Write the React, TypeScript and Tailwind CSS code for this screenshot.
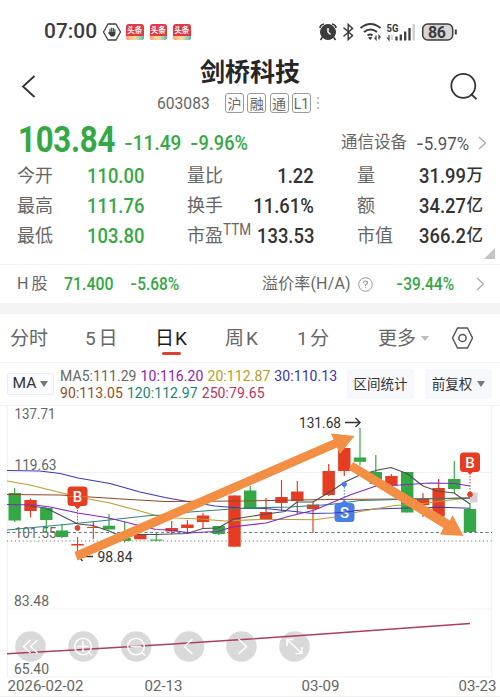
import React from "react";

const GREEN = "#34a844";
const RED = "#e63c22";

function Minus() {
  return <span className="font-['Inter']">-</span>;
}

function StatusBar() {
  return (
    <div className="flex h-[50px] items-center pt-[13px] text-[#3c3c3c]">
      <span className="ml-[44px] w-[58px] origin-left scale-x-[1.02] whitespace-nowrap text-[20.5px] font-medium leading-none">07:00</span>
      <svg width="20" height="18" viewBox="0 0 20 18" fill="none" stroke="#3c3c3c">
        <path d="M6 1h8l4.5 8-4.5 8H6L1.500 9z" strokeWidth="1.3" strokeLinejoin="round" />
        <path d="M8 9V6M9.700 9V5M11.300 9V5.300M12.900 9V6.500M8 9.500h4.900v1.500l-1.200 2H9.200L6.800 10z" strokeWidth="1.100" strokeLinecap="round" fill="#3c3c3c" />
      </svg>
      <div className="ml-[4px] flex gap-[6px]">
        {[0, 1, 2].map((i) => (
          <div key={i} className="flex h-[16px] w-[17.500px] flex-col items-center overflow-hidden rounded-[3px] bg-[#df3942]">
            <span className="h-[12px] whitespace-nowrap text-[7.500px] font-bold leading-[13px] text-white">头条</span>
            <span className="h-[4px] w-full bg-gradient-to-r from-[#f6a97b] via-[#f8dc98] to-[#47bac4]" />
          </div>
        ))}
      </div>
      <svg className="ml-[127px]" width="140" height="22" viewBox="317 20 140 22" fill="none" stroke="#3c3c3c">
        <circle cx="327" cy="31" r="7.500" fill="#3c3c3c" />
        <path d="M319 27q0-3 4-4M335 27q0-3-4-4M321.500 36l-2 3M332.500 36l2 3" strokeWidth="1.600" />
        <path d="M327 27v4l2.500 2.500" stroke="#fff" strokeWidth="1.500" />
        <path d="M342.500 26.500l9 8-4.300 4V23.500l4.300 4-9 8" strokeWidth="1.500" />
        <path d="M359.500 27q10-8 20 0M363 31q6.500-5 13 0M366.500 34.500q3-2 5 0" strokeWidth="2" />
        <path d="M367.700 36.500l1.500 2 1.500-2z" fill="#3c3c3c" />
        <path d="M375 34.500v4l-1.500-2M378 38.500v-4l1.500 2" strokeWidth="1.200" />
        <text x="385.500" y="30.500" fontSize="10" fontWeight="700" textLength="12" lengthAdjust="spacingAndGlyphs" fill="#3c3c3c" stroke="none">5G</text>
        <path d="M388 34v5l-2-2.500" strokeWidth="1.100" />
        <path d="M391 34v5" stroke="#aaa" />
        <path d="M395.500 39.500v-4M399.800 39.500v-6M404.200 39.500v-9M408.500 39.500v-12.500" strokeWidth="2.300" />
        <path d="M412.700 39.500V23" stroke="#ccc" strokeWidth="2.300" />
        <rect x="421.700" y="23" width="30" height="16" rx="5" fill="#d6d6d6" strokeWidth="1.500" />
        <path d="M454.800 28.500v5" strokeWidth="2" />
        <text x="427" y="36.700" fontSize="16" fontWeight="700" textLength="18" fill="#3c3c3c" stroke="none">86</text>
      </svg>
    </div>
  );
}

function Header() {
  return (
    <div className="flex h-[68px]">
      <svg className="ml-[20px] mt-[24px]" width="17" height="24" viewBox="0 0 17 24" fill="none" stroke="#333" strokeWidth="1.800">
        <path d="M14.500 2L3 12.500 14.500 23" />
      </svg>
      <div className="ml-[120px] w-[166px]">
        <div className="ml-[43px] mt-[9px] h-[27px] whitespace-nowrap text-[25px] font-bold leading-[27px] text-[#262626]">剑桥科技</div>
        <div className="mt-[7px] flex h-[20px] items-center">
          <span className="w-[68px] origin-left scale-x-[0.92] whitespace-nowrap text-[17px] leading-none text-[#666]">603083</span>
          <div className="flex gap-[3.300px]">
            {["沪", "融", "通", "L1"].map((t) => (
              <span key={t} className="flex h-[20px] w-[19px] items-center justify-center rounded-[3px] border border-[#999] pt-[1px] text-[14px] leading-none text-[#666]">{t}</span>
            ))}
          </div>
          <div className="ml-[6px] flex flex-col gap-[3px]">
            {[0, 1, 2].map((i) => <i key={i} className="size-[2px] rounded-full bg-[#aaa]" />)}
          </div>
        </div>
      </div>
      <svg className="ml-[126px] mt-[22px]" width="30" height="30" viewBox="449 72 30 30" fill="none" stroke="#333" strokeWidth="1.800">
        <circle cx="463.300" cy="85.800" r="12" />
        <path d="M471 94l5.500 5.200" />
      </svg>
    </div>
  );
}

function Chevron() {
  return (
    <svg width="9" height="14" viewBox="0 0 9 14" fill="none" stroke="#aaa" strokeWidth="1.300">
      <path d="M1 1l6.500 6L1 13" />
    </svg>
  );
}

function PriceRow() {
  return (
    <div className="flex h-[42px] items-center pt-[8px] text-[#34a844]">
      <span className="-mt-[8px] ml-[18px] w-[106px] origin-left scale-x-[0.845] whitespace-nowrap text-[37px] font-bold leading-none tracking-[-0.3px]">103.84</span>
      <span className="w-[66px] origin-left scale-x-[0.95] whitespace-nowrap text-[20px] font-medium leading-none">
        <Minus />11.49
      </span>
      <span className="w-[151px] origin-left scale-x-[0.91] whitespace-nowrap text-[20px] font-medium leading-none">
        <Minus />9.96%
      </span>
      <span className="w-[75px] whitespace-nowrap text-[16.500px] leading-none text-[#666]">通信设备</span>
      <span className="w-[62px] origin-left scale-x-[0.89] whitespace-nowrap text-[19px] leading-none text-[#555]">
        <Minus />5.97%
      </span>
      <Chevron />
    </div>
  );
}

type Stat = { label: string; sup?: string; value: string; unit?: string };
const stats: Stat[] = [
  { label: "今开", value: "110.00" },
  { label: "量比", value: "1.22" },
  { label: "量", value: "31.99", unit: "万" },
  { label: "最高", value: "111.76" },
  { label: "换手", value: "11.61%" },
  { label: "额", value: "34.27", unit: "亿" },
  { label: "最低", value: "103.80" },
  { label: "市盈", sup: "TTM", value: "133.53" },
  { label: "市值", value: "366.2", unit: "亿" },
];

function Stats() {
  return (
    <div className="grid h-[104px] grid-cols-[127px_127px_126px] grid-rows-[30px_30px_30px] gap-x-[43px] pl-[17px] pt-[1px]">
      {stats.map((s, i) => (
        <div key={s.label} className="flex items-center justify-between whitespace-nowrap leading-none">
          <span className="flex text-[18px] text-[#666]">
            {s.label}
            {s.sup && <span className="-mt-[5px] w-0 origin-left scale-x-[0.85] text-[16px]">{s.sup}</span>}
          </span>
          <span className="flex items-center">
            <span className={`origin-right scale-x-[0.92] text-[20px] font-medium ${i % 3 === 0 ? "text-[#34a844]" : "text-[#333]"}`}>{s.value}</span>
            {s.unit && <span className="text-[16.500px] font-medium text-[#333]">{s.unit}</span>}
          </span>
        </div>
      ))}
    </div>
  );
}

function HShareRow() {
  return (
    <div className="flex h-[39px] items-center border-t border-[#f1f1f1] text-[18px] leading-none text-[#34a844]">
      <span className="ml-[17px] w-[47px] whitespace-nowrap text-[16px] text-[#666] [word-spacing:-1px]">H 股</span>
      <span className="w-[66px] origin-left scale-x-[0.88] whitespace-nowrap font-medium">71.400</span>
      <span className="w-[132px] origin-left scale-x-[0.86] whitespace-nowrap font-medium"><Minus />5.68%</span>
      <span className="w-[96px] whitespace-nowrap text-[16px] tracking-[0.150px] text-[#666]">溢价率(H/A)</span>
      <svg width="15" height="15" viewBox="0 0 15 15" fill="none" stroke="#999">
        <circle cx="7.500" cy="7.500" r="6.800" />
        <path d="M5.500 6q0-2 2-2t2 1.800q0 1-1.200 1.500t-.8 1.700M7.500 10.300v1" strokeWidth="1.200" />
      </svg>
      <span className="ml-[23px] w-[80px] origin-left scale-x-[0.86] whitespace-nowrap font-medium"><Minus />39.44%</span>
      <Chevron />
    </div>
  );
}

function Tabs() {
  return (
    <div className="flex h-[49px] items-center border-b border-[#f1f1f1] text-[19px] leading-none text-[#666]">
      <span className="ml-[10px] w-[75px]">分时</span>
      <span className="w-[70px] [word-spacing:-2px]">5 日</span>
      <span className="relative w-[70px] text-[#1c1c1c]">
        日<span className="ml-[1px]">K</span>
        <i className="absolute -bottom-[7px] left-[7px] h-[2.500px] w-[19px] rounded bg-[#d94430]" />
      </span>
      <span className="w-[72px]">周<span className="ml-[2px]">K</span></span>
      <span className="w-[81px] [word-spacing:-2.500px]">1 分</span>
      <span className="w-[43px]">更多</span>
      <i className="h-0 w-0 border-x-[4px] border-t-[5px] border-x-transparent border-t-[#bbb]" />
      <svg className="ml-[22px]" width="23" height="22" viewBox="0 0 23 22" fill="none" stroke="#555" strokeWidth="1.500">
        <path d="M6.500 1h10l5 10-5 10h-10l-5-10z" strokeLinejoin="round" />
        <circle cx="11.500" cy="11" r="3.600" />
      </svg>
    </div>
  );
}

function Indicators() {
  return (
    <div className="flex h-[42px] items-start whitespace-nowrap text-[14px] text-[#333]">
      <div className="ml-[7px] mt-[10px] flex h-[22px] w-[47px] items-center justify-center gap-[4px] rounded-[2px] border border-[#ebedf3] bg-[#fafbfe] text-[15.500px]">
        MA<i className="h-0 w-0 border-x-[4px] border-t-[6px] border-x-transparent border-t-[#777]" />
      </div>
      <div className="ml-[6px] mt-[5px] w-[287px] text-[14px] leading-[16.500px]">
        <div className="flex gap-[4px] tracking-[0.080px]">
          <span className="text-[#666]">MA5:111.29</span>
          <span className="text-[#8c22bd]">10:116.20</span>
          <span className="text-[#bc9a28]">20:112.87</span>
          <span className="text-[#3c34ab]">30:110.13</span>
        </div>
        <div className="flex gap-[4px] tracking-[0.080px]">
          <span className="text-[#954d23]">90:113.05</span>
          <span className="text-[#218574]">120:112.97</span>
          <span className="text-[#b43561]">250:79.65</span>
        </div>
      </div>
      <div className="mt-[6px] flex h-[30px] w-[67px] items-center justify-center rounded-[2px] bg-[#f7f8fc] text-[13.500px]">区间统计</div>
      <div className="ml-[11px] mt-[6px] flex h-[30px] w-[67px] items-center justify-center gap-[5px] rounded-[2px] bg-[#f7f8fc] text-[13.500px]">
        前复权<i className="h-0 w-0 border-x-[4px] border-t-[6px] border-x-transparent border-t-[#777]" />
      </div>
    </div>
  );
}

// x centre, high, body top, body bottom, low, rising
const candles: [number, number, number, number, number, boolean][] = [
  [14.7, 488, 493, 520.5, 522, false],
  [30.5, 498.5, 500, 511, 517.5, true],
  [46.3, 508, 508, 520, 532, false],
  [62, 524, 530.5, 537, 538, false],
  [77.5, 537, 544, 545.5, 554, true],
  [93.3, 522, 527, 528, 539, true],
  [109, 514, 525.7, 529.5, 529.5, false],
  [124.7, 522, 538, 541, 542.5, false],
  [140.3, 534, 534, 539.3, 539.3, true],
  [156.3, 533, 539.5, 540.7, 540.7, false],
  [171.7, 521, 528, 531.5, 534, true],
  [187.4, 520, 524.5, 528, 533, true],
  [203, 513, 515.5, 522, 528.5, true],
  [218.7, 526, 526, 534, 535, false],
  [234.5, 495.5, 495.5, 546.7, 546.7, true],
  [250.2, 486, 490.5, 508.5, 508.5, false],
  [266, 498, 512, 519, 520, true],
  [281.5, 480, 497, 503, 511, true],
  [297.3, 481, 491.5, 501, 514, true],
  [313, 502, 504.5, 509, 533, true],
  [328.7, 464, 471, 495, 496, true],
  [344.3, 448, 448, 471, 476, true],
  [360, 428, 457.5, 461.8, 465.5, false],
  [375.8, 455, 472, 484, 484, false],
  [391.4, 474, 476, 485.5, 485.5, true],
  [407.2, 472, 472, 512.5, 512.5, false],
  [423, 493, 499, 505, 517, true],
  [438.6, 479, 488, 516.5, 516.5, true],
  [454.3, 461, 479, 489, 493, false],
  [470, 503, 509, 532, 532, false],
];

const averages: [string, string][] = [
  ["#3b39b5", "7,470.5 40,471 60,473.500 78,478 110,483.500 140,492 165,497.500 190,502 215,506 240,508 265,508.500 290,511 313,513.500 333,513 350,511 375,509 407,508 440,507.300 470,508.300"],
  ["#c09a32", "7,481 30,485 50,490 78,497 110,503 140,511 156,515.500 175,518 200,519 225,521 260,519.500 290,519.500 315,519.700 335,517 360,511.500 395,505.500 420,504 445,500.500 470,498"],
  ["#93462c", "7,494.5 60,495 90,497 130,499.500 165,501.500 240,501 330,499.500 400,499 470,498"],
  ["#2b857a", "7,530 60,525 100,521 150,515.500 165,515 190,512 225,509.500 250,508 290,507 330,504.500 360,500.500 400,499.500 470,498"],
  ["#8426c4", "7,504.5 35,505 50,507 78,513 109,518 135,524.500 156,529.500 170,530 190,533 205,532 218,531.500 232,527 266,523 290,516 313,510.500 330,503.500 350,495 376,486 400,485 430,483 455,483.500 470,486"],
  ["#4d4d55", "30,506 46,508 62,516 78,524 93,525.500 109,531 117,534.500 156,534.500 187,533.500 203,528.500 218,528 234,519 266,514 285,511.500 297,502 313,502 333,490 345,482 360,475 378,470 391,467.500 407,473.500 423,486 437,491 454,493 470,504"],
];

function Label({ x, y, w, children, color = "#666" }: { x: number; y: number; w: number; children: string; color?: string }) {
  return <text x={x} y={y} fontSize="14.500" fill={color} textLength={w} lengthAdjust="spacingAndGlyphs">{children}</text>;
}

function Chart() {
  return (
    <svg className="block" width="500" height="292" viewBox="0 405 500 292" fill="none">
      <path d="M0 405.500H500M7 472.500H492M7 609H492M7 677H492M0 696.500H500M7.300 405V677M491.700 405V677" stroke="#f1f0f2" />
      <Label x={14.500} y={419} w={41}>137.71</Label>
      <Label x={14.500} y={470} w={42}>119.63</Label>
      <Label x={14.500} y={538} w={42}>101.55</Label>
      <Label x={14} y={606} w={35}>83.48</Label>
      <Label x={14} y={674} w={35}>65.40</Label>
      <Label x={7.500} y={690.500} w={76}>2026-02-02</Label>
      <Label x={144.500} y={690.500} w={38}>02-13</Label>
      <Label x={301.500} y={690.500} w={38}>03-09</Label>
      <Label x={458.500} y={690.500} w={38}>03-23</Label>
      <path d="M7 532.500H492" stroke="#587b91" strokeDasharray="3 2.500" />
      <path d="M7 541H492" stroke="#777" strokeWidth="1.200" strokeDasharray="1.200 2.700" />
      <rect x="470" y="492.500" width="7.500" height="10" fill="#d4d2d4" />
      {candles.map(([x, hi, top, bottom, lo, up]) => (
        <g key={x} fill={up ? RED : GREEN} stroke={up ? RED : GREEN}>
          <path d={`M${x} ${hi}V${lo}`} strokeWidth="1.200" />
          <rect x={x - 6.200} y={top} width="12.400" height={bottom - top} stroke="none" />
        </g>
      ))}
      {averages.map(([color, points]) => (
        <polyline key={color} points={points} stroke={color} strokeWidth="1.100" strokeLinejoin="round" />
      ))}
      <g fill="#000" fillOpacity="0.150">
        {[30.5, 83.5, 136.2, 189, 241.5, 294.5].map((x) => <circle key={x} cx={x} cy="646.500" r="15.300" />)}
      </g>
      <polyline points="7,653.700 83,649.500 165,644.500 250,639 330,633.500 400,628.500 470,623.500" stroke="#ad3e63" strokeWidth="1.400" />
      <g stroke="#fff" strokeWidth="1.500">
        <path d="M30.500 640l-7 6.500 7 6.500M37.500 640l-7 6.500 7 6.500" />
        <circle cx="83" cy="646.500" r="8.300" />
        <path d="M77.500 646.500h11M83 641v11M89 652.500l3 3" />
        <circle cx="136" cy="646.500" r="8.300" />
        <path d="M130.500 646.500h11M142 652.500l3 3" />
        <path d="M192.500 639l-8 7.500 8 7.500M238.500 639l8 7.500-8 7.500" />
        <path d="M287.500 640l14 13M287 646v-6.500h6.500M302 647v6.500h-6.500" />
      </g>
      <g fill={RED} stroke={RED}>
        <path d="M77.500 510v15M470 476v16" strokeDasharray="1.500 1.500" />
        <circle cx="77.500" cy="528" r="2.400" />
        <circle cx="470" cy="494.500" r="2.400" />
        <path d="M75 506h5l-2.500 3zM467.500 471.500h5l-2.500 3z" />
        <rect x="68" y="487" width="19" height="18.500" rx="2.500" />
        <rect x="460.500" y="453" width="19" height="18.500" rx="2.500" />
      </g>
      <path d="M67 496.500h21" stroke="#e36c28" />
      <g fill="#4b7de8" stroke="#4b7de8">
        <path d="M344.300 487v13" strokeDasharray="1.500 1.500" />
        <circle cx="344.300" cy="484.300" r="2.200" />
        <path d="M341.800 503l2.500-3 2.500 3z" />
        <rect x="335" y="503.500" width="19" height="18" rx="2.500" />
      </g>
      <g fill="#fff" fontSize="15" fontWeight="500" textAnchor="middle">
        <text x="77.500" y="501.500">B</text>
        <text x="470" y="467.500">B</text>
        <text x="344.500" y="518">S</text>
      </g>
      <path d="M335 513l19-1.800" stroke="#3b39b5" />
      <path d="M93 556.500H79M84 551.500l-5 5 3.500 4.500" stroke="#333" strokeWidth="1.300" />
      <Label x={97.500} y={562} w={35} color="#333">98.84</Label>
      <Label x={299} y={428} w={42} color="#333">131.68</Label>
      <path d="M345 422.500h14.500M355.500 418l4.500 4.500-4.500 4.500" stroke="#333" strokeWidth="1.400" />
      <g fill="#f28f45">
        <path d="M74.500 552L333.500 439.500l-2.500-6L354.500 436l-14.500 18-3-6.500L77.500 560.500z" />
        <path d="M353 462L450 520.500l2.500-5.500 11 21-23.500-1.500 3.500-6.500L348.500 469.500z" />
      </g>
    </svg>
  );
}

export default function App() {
  return (
    <main className="h-[697px] w-[500px] overflow-hidden bg-white font-[Roboto,'Noto_Sans_CJK_SC',sans-serif]">
      <StatusBar />
      <Header />
      <PriceRow />
      <div className="relative">
        <Stats />
        <i className="absolute bottom-[5px] right-[5px] border-b-[11px] border-l-[11px] border-b-[#c4c4c4] border-l-transparent" />
      </div>
      <HShareRow />
      <div className="h-[11px] bg-[#f4f4f4]" />
      <Tabs />
      <Indicators />
      <Chart />
    </main>
  );
}
